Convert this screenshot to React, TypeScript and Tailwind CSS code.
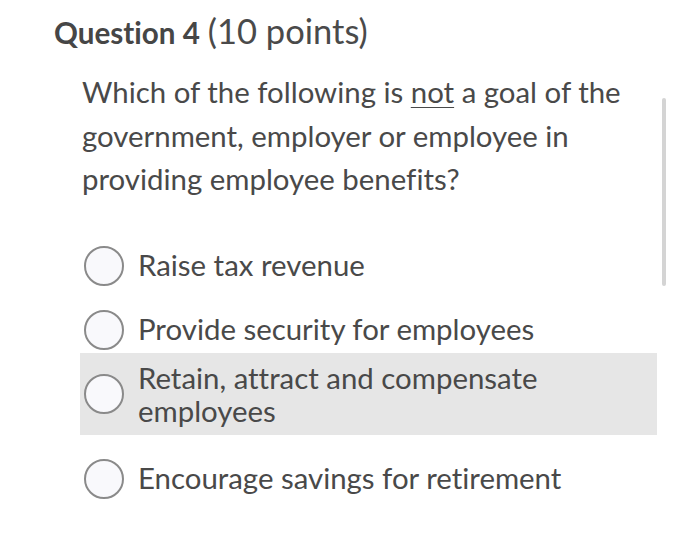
import React from "react";

function Radio() {
  return (
    <span className="block w-[40px] h-[40px] shrink-0 rounded-full border-2 border-[#8a8a8a] bg-[#f9f9fc]" />
  );
}

export default function App() {
  return (
    <div
      className="relative w-[700px] h-[537px] bg-white text-[#494949] overflow-hidden"
      style={{ fontFamily: "Lato, 'Open Sans', sans-serif", fontVariantLigatures: "none" }}
    >
      <div className="pl-[54px] pt-[10px]">
        <h1 className="h-[42px] flex items-baseline text-[#464646] whitespace-nowrap">
          <span className="font-bold text-[29.6px] leading-[42px]">Question 4</span>
          <span className="ml-[8px] text-[34.5px] leading-[42px] text-[#4a4a4a]">(10 points)</span>
        </h1>
      </div>
      <div className="pl-[82px] pr-[50px] pt-[18px]">
        <p className="text-[29.4px] leading-[43.5px]">
          Which of the following is <span className="underline underline-offset-4 decoration-1">not</span> a goal of the
          government, employer or employee in providing employee benefits?
        </p>
      </div>
      <div className="absolute left-[662px] top-[98px] w-[4px] h-[188px] rounded-full bg-[#d4d4d4]" />
      <div className="pl-[80px] pr-[43px] pt-[44px] flex flex-col text-[29.4px]">
        <div className="flex items-center gap-[14px] pl-[4px] h-[42px]">
          <Radio />
          <span>Raise tax revenue</span>
        </div>
        <div className="flex items-center gap-[14px] pl-[4px] h-[42px] mt-[22px]">
          <Radio />
          <span>Provide security for employees</span>
        </div>
        <div className="flex items-center gap-[14px] pl-[4px] h-[82px] mt-[2px] bg-[#e6e6e6]">
          <Radio />
          <span className="leading-[33px]">Retain, attract and compensate<br />employees</span>
        </div>
        <div className="flex items-center gap-[14px] pl-[4px] h-[42px] mt-[23px]">
          <Radio />
          <span>Encourage savings for retirement</span>
        </div>
      </div>
    </div>
  );
}
